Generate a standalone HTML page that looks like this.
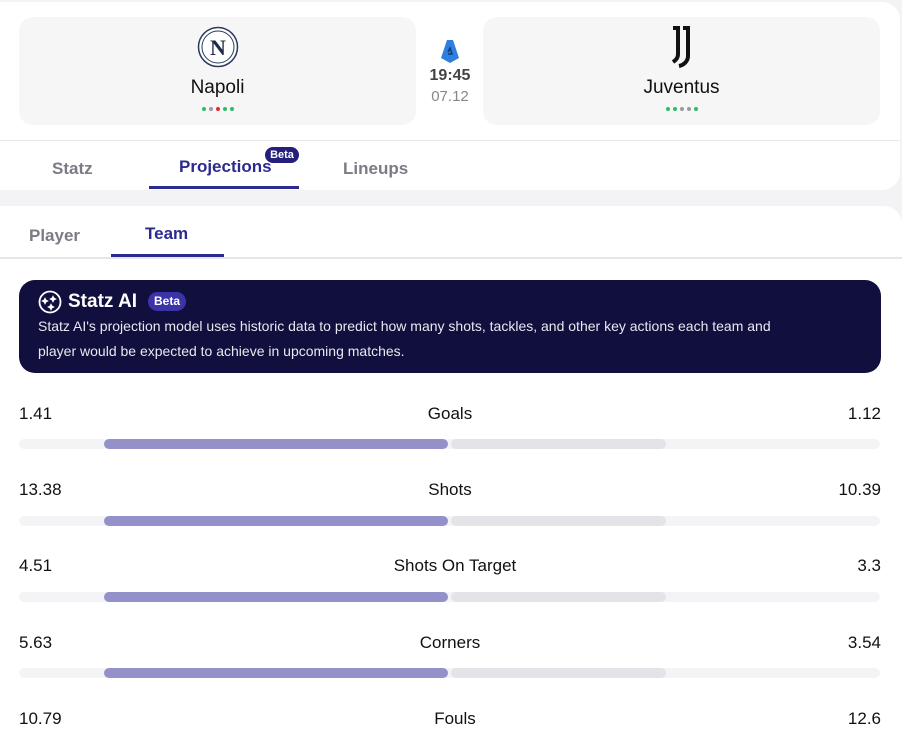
<!DOCTYPE html>
<html><head><style>
*{margin:0;padding:0;box-sizing:border-box}
body{width:902px;height:738px;background:#f3f3f5;font-family:"Liberation Sans",sans-serif;position:relative;overflow:hidden;color:#111}
.a{position:absolute}
.card1{left:0;top:2px;width:900px;height:188px;background:#fff;border-radius:0 18px 18px 0}
.team{top:17px;width:397px;height:108px;background:#f6f6f7;border-radius:14px;text-align:center}
.team .n{position:absolute;top:60px;width:100%;font-size:19px;color:#111}
.dots{position:absolute;top:90px;left:0;width:100%;text-align:center;font-size:0}
.dots i{display:inline-block;width:4px;height:4px;border-radius:50%;margin:0 1.5px}
.tab{font-size:17px;font-weight:bold;color:#7b7b86}
.card2{left:0;top:206px;width:902px;height:540px;background:#fff;border-radius:0 18px 0 0}
.val{font-size:17px;color:#111}
.track{left:19px;width:861px;height:10px;background:#f4f4f6;border-radius:5px}
.lf{height:10px;background:#9490ca;border-radius:5px}
.rf{height:10px;background:#e4e4e8;border-radius:5px}
</style></head><body>
<div class="a card1"></div>
<div class="a team" style="left:19px">
 <svg class="a" style="left:178px;top:9px" width="42" height="42" viewBox="0 0 42 42"><circle cx="21" cy="21" r="19.5" fill="#fff" stroke="#2a3a5a" stroke-width="1.5"/><circle cx="21" cy="21" r="16" fill="none" stroke="#2a3a5a" stroke-width="1"/><text x="21" y="29" text-anchor="middle" font-family="Liberation Serif" font-weight="bold" font-size="22" fill="#1e2a48">N</text></svg>
 <div class="n">Napoli</div>
 <div class="dots"><i style="background:#2ebd6b"></i><i style="background:#9a9aa6"></i><i style="background:#e0302c"></i><i style="background:#2ebd6b"></i><i style="background:#2ebd6b"></i></div>
</div>
<div class="a team" style="left:483px">
 <svg class="a" style="left:185px;top:9px" width="28" height="42" viewBox="0 0 28 42"><path d="M5 2h5v26c0 4-2 6-5 8" fill="none" stroke="#111" stroke-width="4"/><path d="M15 2h5v28c0 5-4 9-9 10" fill="none" stroke="#111" stroke-width="4"/></svg>
 <div class="n">Juventus</div>
 <div class="dots"><i style="background:#2ebd6b"></i><i style="background:#2ebd6b"></i><i style="background:#9a9aa6"></i><i style="background:#9a9aa6"></i><i style="background:#2ebd6b"></i></div>
</div>
<svg class="a" style="left:440px;top:39px" width="20" height="25" viewBox="0 0 20 25"><path d="M7 1h6l6 18-9 5-9-5z" fill="#2f7fe0"/><path d="M8 13l2-4 2 6h-4" fill="none" stroke="#0d3a80" stroke-width="1.5"/></svg>
<div class="a" style="left:420px;top:67px;width:60px;text-align:center;font-size:16px;font-weight:bold;color:#444">19:45</div>
<div class="a" style="left:420px;top:88px;width:60px;text-align:center;font-size:15px;color:#888">07.12</div>
<div class="a" style="left:0;top:140px;width:900px;height:1px;background:#e8e8ec"></div>
<div class="a tab" style="left:52px;top:159px">Statz</div>
<div class="a tab" style="left:179px;top:157px;color:#2b2a8e">Projections</div>
<div class="a" style="left:265px;top:147px;width:34px;height:16px;border-radius:8px;background:#241f7a;color:#fff;font-size:11px;font-weight:bold;text-align:center;line-height:16px">Beta</div>
<div class="a" style="left:149px;top:186px;width:150px;height:3px;background:#2b2a8e"></div>
<div class="a tab" style="left:343px;top:159px">Lineups</div>
<div class="a card2"></div>
<div class="a tab" style="left:29px;top:226px">Player</div>
<div class="a tab" style="left:145px;top:224px;color:#2b2a8e">Team</div>
<div class="a" style="left:0;top:257px;width:902px;height:2px;background:#e6e6ea"></div>
<div class="a" style="left:111px;top:254px;width:113px;height:3px;background:#2b2a8e"></div>
<div class="a" style="left:19px;top:280px;width:862px;height:93px;background:#110f3d;border-radius:16px"></div>
<svg class="a" style="left:38px;top:290px" width="24" height="24" viewBox="0 0 24 24" fill="none" stroke="#fff" stroke-width="1.8"><circle cx="12" cy="12" r="10.5"/><path d="M7 8l1 2 2 1-2 1-1 2-1-2-2-1 2-1z" fill="#fff" stroke-width="0.8"/><path d="M15 6l1 2 2 1-2 1-1 2-1-2-2-1 2-1z" fill="#fff" stroke-width="0.8"/><path d="M13 14l1 2 2 1-2 1-1 2-1-2-2-1 2-1z" fill="#fff" stroke-width="0.8"/></svg>
<div class="a" style="left:68px;top:291px;font-size:19px;font-weight:bold;color:#fff">Statz AI</div>
<div class="a" style="left:148px;top:292px;width:38px;height:19px;border-radius:10px;background:#3b34a8;color:#fff;font-size:12px;font-weight:bold;text-align:center;line-height:19px">Beta</div>
<div class="a" style="left:38px;top:314px;width:770px;font-size:14px;line-height:25px;color:#e8e8f0">Statz AI's projection model uses historic data to predict how many shots, tackles, and other key actions each team and player would be expected to achieve in upcoming matches.</div>

<div class="a val" style="left:19px;top:404px">1.41</div><div class="a val" style="left:0;width:900px;text-align:center;top:404px">Goals</div><div class="a val" style="right:21px;top:404px">1.12</div>
<div class="a track" style="top:439px"></div><div class="a lf" style="left:104px;top:439px;width:344px"></div><div class="a rf" style="left:451px;top:439px;width:215px"></div>

<div class="a val" style="left:19px;top:480px">13.38</div><div class="a val" style="left:0;width:900px;text-align:center;top:480px">Shots</div><div class="a val" style="right:21px;top:480px">10.39</div>
<div class="a track" style="top:516px"></div><div class="a lf" style="left:104px;top:516px;width:344px"></div><div class="a rf" style="left:451px;top:516px;width:215px"></div>

<div class="a val" style="left:19px;top:556px">4.51</div><div class="a val" style="left:0;width:910px;text-align:center;top:556px">Shots On Target</div><div class="a val" style="right:21px;top:556px">3.3</div>
<div class="a track" style="top:592px"></div><div class="a lf" style="left:104px;top:592px;width:344px"></div><div class="a rf" style="left:451px;top:592px;width:215px"></div>

<div class="a val" style="left:19px;top:633px">5.63</div><div class="a val" style="left:0;width:900px;text-align:center;top:633px">Corners</div><div class="a val" style="right:21px;top:633px">3.54</div>
<div class="a track" style="top:668px"></div><div class="a lf" style="left:104px;top:668px;width:344px"></div><div class="a rf" style="left:451px;top:668px;width:215px"></div>

<div class="a val" style="left:19px;top:709px">10.79</div><div class="a val" style="left:0;width:910px;text-align:center;top:709px">Fouls</div><div class="a val" style="right:21px;top:709px">12.6</div>
</body></html>
